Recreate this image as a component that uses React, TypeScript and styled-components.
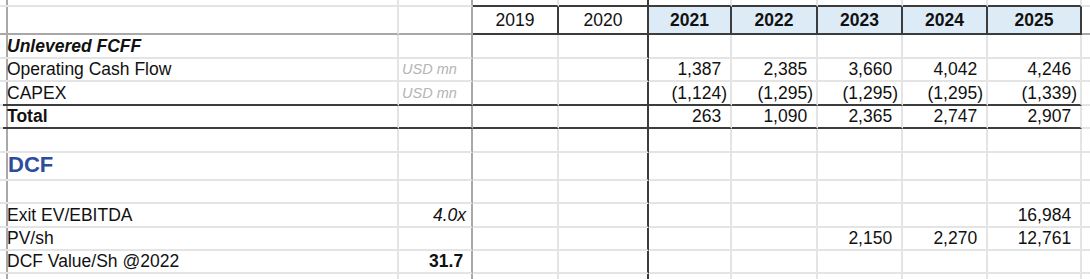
import React from 'react';
import styled, { createGlobalStyle } from 'styled-components';

const GlobalStyle = createGlobalStyle`
  html, body {
    margin: 0;
    padding: 0;
    background: #fff;
    overflow: hidden;
  }
  body {
    font-family: 'Liberation Sans', Arial, sans-serif;
    color: #111;
  }
`;

// column widths / row heights read off the sheet (last one fills the rest)
const COLS = [3, 396, 74, 86, 90, 83, 86, 85, 85, 94];
const ROWS = [7, 28, 24, 23, 24, 23, 24, 28, 23, 24, 23, 23];

const GRID = '2px solid #e4e4e4';
const DARK = '2px solid #3c3c3c';
const FREEZE = '2px solid #a8a8a8';

const Sheet = styled.div`
  display: grid;
  grid-template-columns: ${COLS.map(w => `${w}px`).join(' ')} 1fr;
  grid-template-rows: ${ROWS.map(h => `${h}px`).join(' ')} 1fr;
  width: 1090px;
  height: 279px;
  overflow: hidden;
`;

const Cell = styled.div`
  box-sizing: border-box;
  display: flex;
  align-items: flex-end;
  justify-content: ${p => p.$align === 'right' ? 'flex-end' : p.$align === 'center' ? 'center' : 'flex-start'};
  padding: 0 ${p => p.$padR ?? 3}px 1px ${p => p.$padL ?? 3}px;
  border-right: ${p => p.$r};
  border-bottom: ${p => p.$b};
  background: ${p => p.$bg || 'transparent'};
  white-space: nowrap;
  overflow: visible;
  min-width: 0;
  font-size: 17.5px;
  line-height: 20px;
`;

const Label = styled.span`
  font-weight: ${p => (p.$bold ? 700 : 400)};
  font-style: ${p => (p.$italic ? 'italic' : 'normal')};
`;

const SectionTitle = styled.span`
  font-size: 22px;
  line-height: 24px;
  font-weight: 700;
  color: #2f4c9c;
  padding-bottom: 1px;
`;

const Unit = styled.span`
  font-size: 14.5px;
  font-style: italic;
  color: #b4b4b4;
`;

const Year = styled.span`
  font-size: 17.5px;
  font-weight: ${p => (p.$bold ? 700 : 400)};
  padding-bottom: 2px;
`;

const Num = styled.span`
  font-weight: ${p => (p.$bold ? 700 : 400)};
  font-style: ${p => (p.$italic ? 'italic' : 'normal')};
`;

const Paren = styled.span`
  visibility: hidden;
`;

const fmt = (v, bold = false) => {
  if (v === null || v === undefined) return null;
  const neg = v < 0;
  const s = Math.abs(v).toLocaleString('en-US');
  return (
    <Num $bold={bold}>
      {neg ? `(${s})` : s}
      {!neg && <Paren>)</Paren>}
    </Num>
  );
};

const YEARS = [2019, 2020, 2021, 2022, 2023, 2024, 2025];

const rows = [
  { kind: 'blank' },
  { kind: 'header' },
  { kind: 'label', label: 'Unlevered FCFF', bold: true, italic: true },
  { kind: 'data', label: 'Operating Cash Flow', unit: 'USD mn', values: [null, null, 1387, 2385, 3660, 4042, 4246] },
  { kind: 'data', label: 'CAPEX', unit: 'USD mn', values: [null, null, -1124, -1295, -1295, -1295, -1339] },
  { kind: 'data', label: 'Total', bold: true, values: [null, null, 263, 1090, 2365, 2747, 2907] },
  { kind: 'blank' },
  { kind: 'section', label: 'DCF' },
  { kind: 'blank' },
  { kind: 'data', label: 'Exit EV/EBITDA', note: '4.0x', values: [null, null, null, null, null, null, 16984] },
  { kind: 'data', label: 'PV/sh', values: [null, null, null, null, 2150, 2270, 12761] },
  { kind: 'data', label: 'DCF Value/Sh @2022', result: '31.7', values: [] },
  { kind: 'blank' },
];

const rightBorder = (r, c) => {
  if (c === 0 || c === 2) return FREEZE;
  if (c === 4) return DARK;
  if (r === 1 && c >= 3 && c <= 9) return DARK;
  if (c === 10) return 'none';
  return GRID;
};

const bottomBorder = (r, c) => {
  if (r === 0 && c >= 3 && c <= 9) return DARK;
  if (r === 1) return c >= 3 && c <= 9 ? DARK : FREEZE;
  if ((r === 4 || r === 5) && c >= 1 && c <= 9) return DARK;
  if (r === rows.length - 1) return 'none';
  return GRID;
};

const cellContent = (row, c) => {
  if (row.kind === 'header') {
    if (c >= 3 && c <= 9) {
      const y = YEARS[c - 3];
      return { node: <Year $bold={y >= 2021}>{y}</Year>, align: 'center', bg: y >= 2021 ? '#ddebf7' : null };
    }
    return {};
  }
  if (c === 1) {
    if (row.kind === 'section') return { node: <SectionTitle>{row.label}</SectionTitle>, padL: 5 };
    if (row.label) return { node: <Label $bold={row.bold} $italic={row.italic}>{row.label}</Label>, padL: 4 };
    return {};
  }
  if (c === 2) {
    if (row.unit) return { node: <Unit>{row.unit}</Unit> };
    if (row.note) return { node: <Num $italic>{row.note}</Num>, align: 'right', padR: 5 };
    if (row.result) return { node: <Num $bold>{row.result}<Paren>)</Paren></Num>, align: 'right', padR: 2 };
    return {};
  }
  if (c >= 3 && c <= 9 && row.values) {
    const v = row.values[c - 3];
    if (v !== null && v !== undefined) return { node: fmt(v), align: 'right', padR: 3 };
  }
  return {};
};

const App = () => {
  return (
    <>
      <GlobalStyle />
      <Sheet>
        {rows.map((row, r) =>
          Array.from({ length: 11 }).map((_, c) => {
            const { node, align, bg, padR, padL } = cellContent(row, c);
            return (
              <Cell
                key={`${r}-${c}`}
                $r={rightBorder(r, c)}
                $b={bottomBorder(r, c)}
                $align={align}
                $bg={bg}
                $padR={padR}
                $padL={padL}
              >
                {node}
              </Cell>
            );
          })
        )}
      </Sheet>
    </>
  );
};

export default App;
